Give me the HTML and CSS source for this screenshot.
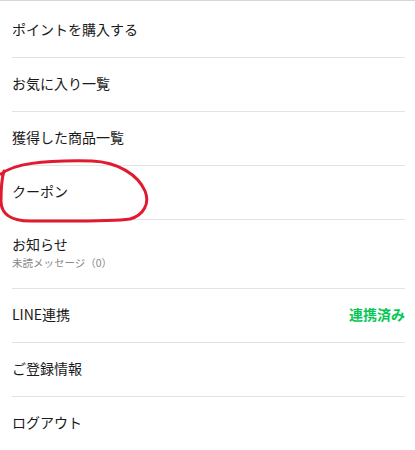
FILE: index.html
```html
<!DOCTYPE html>
<html lang="ja">
<head>
  <meta charset="UTF-8" />
  <title>マイページ</title>
  <link rel="stylesheet" href="styles.css">
</head>
<body>

  <main class="menu">
    <a href="#" class="menu-item">ポイントを購入する</a>
    <a href="#" class="menu-item">お気に入り一覧</a>
    <a href="#" class="menu-item">獲得した商品一覧</a>
    <a href="#" class="menu-item">クーポン</a>
    <a href="#" class="menu-item menu-item-tall">
      <span class="item-title">お知らせ</span>
      <span class="item-sub">未読メッセージ（0）</span>
    </a>
    <a href="#" class="menu-item">
      <span>LINE連携</span>
      <span class="item-status">連携済み</span>
    </a>
    <a href="#" class="menu-item">ご登録情報</a>
    <a href="#" class="menu-item">ログアウト</a>

    <!-- 手書きの丸囲み -->
    <svg class="mark" width="160" height="70" viewBox="0 155 160 70">
      <path d="M1 173 C 14 163, 40 159, 92 160 C 118 161, 138 174, 145 190 C 150 202, 144 214, 130 218 C 110 221, 60 220, 30 220 C 10 220, 1 212, 1 200 C 1 188, 1 180, 4 170"
            fill="none" stroke="#e01b2f" stroke-width="3" stroke-linecap="round" />
    </svg>
  </main>

</body>
</html>
```

FILE: styles.css
```css
* {
  box-sizing: border-box;
}

body {
  margin: 0;
  padding: 0;
  background-color: #fff;
  font-family: "Noto Sans CJK JP", "Noto Sans", sans-serif;
  color: #222;
}

.menu {
  position: relative;
  border-top: 1px solid #d6d6d6;
  padding-top: 3px;
}

.menu-item {
  display: flex;
  align-items: center;
  justify-content: space-between;
  height: 54px;
  margin: 0 10px 0 12px;
  padding-bottom: 3px;
  border-bottom: 1px solid #e3e3e3;
  color: #1a1a1a;
  text-decoration: none;
  font-size: 14px;
}

.menu-item-tall {
  height: 69px;
  flex-direction: column;
  align-items: flex-start;
  justify-content: center;
  gap: 1px;
}

.item-title {
  line-height: 20px;
}

.item-sub {
  font-size: 10.5px;
  line-height: 16px;
  color: #888;
}

.item-status {
  color: #06c755;
  font-weight: 700;
}

.mark {
  position: absolute;
  left: 0;
  top: 155px;
  pointer-events: none;
}
```
